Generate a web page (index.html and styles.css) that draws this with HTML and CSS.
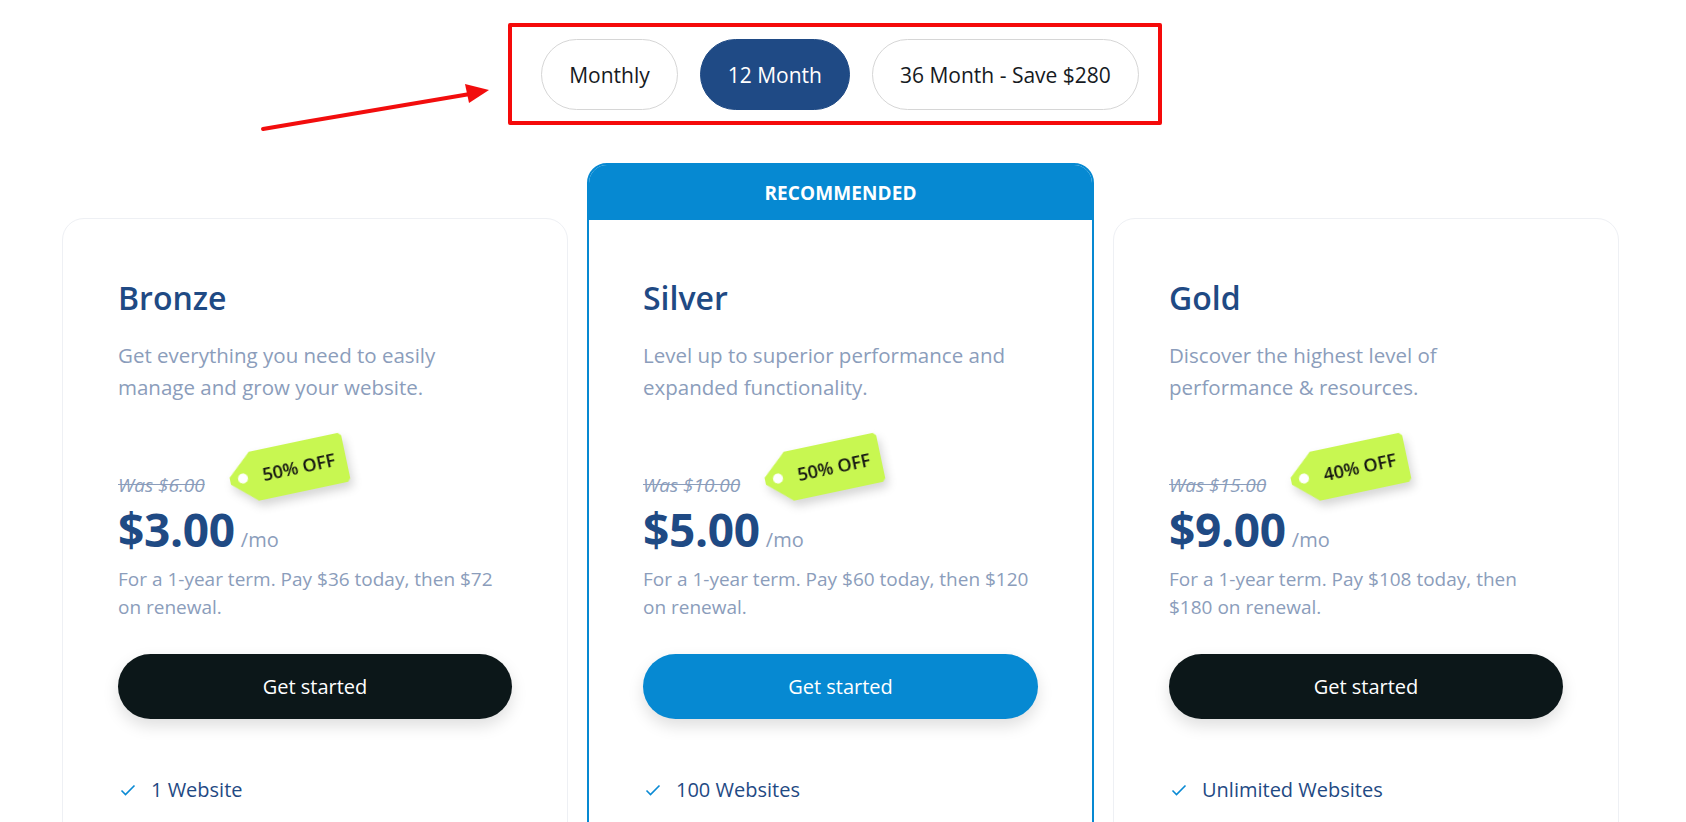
FILE: index.html
```html
<!DOCTYPE html>
<html lang="en">
<head>
<meta charset="utf-8">
<title>Pricing</title>
<link rel="stylesheet" href="styles.css">
</head>
<body>
<svg class="arrow" width="520" height="140" viewBox="0 0 520 140" aria-hidden="true">
  <line x1="263" y1="129" x2="470" y2="94" stroke="#f20d0d" stroke-width="4" stroke-linecap="round"/>
  <polygon points="489,90 469,103 465,84" fill="#f20d0d"/>
</svg>
<main class="page">
  <div class="annot-box"></div>
  <nav class="toggle">
    <button class="pill">Monthly</button>
    <button class="pill pill-active">12 Month</button>
    <button class="pill">36 Month - Save $280</button>
  </nav>

  <section class="plans">
    <article class="card">
      <div class="card-body">
        <h2 class="plan-name">Bronze</h2>
        <p class="plan-desc">Get everything you need to easily<br>manage and grow your website.</p>
        <div class="was-row">
          <span class="was">Was $6.00</span>
          <span class="tag-wrap"><span class="tag">50% OFF</span></span>
        </div>
        <div class="price-row"><span class="price">$3.00</span><span class="per">/mo</span></div>
        <p class="term">For a 1-year term. Pay $36 today, then $72<br>on renewal.</p>
        <button class="cta">Get started</button>
        <ul class="features">
          <li><svg class="check" width="16" height="12" viewBox="0 0 16 12"><polyline points="1.5,6.5 5.5,10.5 14.5,1.5" fill="none" stroke="#0a8ad4" stroke-width="1.6"/></svg>1 Website</li>
        </ul>
      </div>
    </article>

    <article class="card card-featured">
      <div class="card-head">RECOMMENDED</div>
      <div class="card-body">
        <h2 class="plan-name">Silver</h2>
        <p class="plan-desc">Level up to superior performance and<br>expanded functionality.</p>
        <div class="was-row">
          <span class="was">Was $10.00</span>
          <span class="tag-wrap"><span class="tag">50% OFF</span></span>
        </div>
        <div class="price-row"><span class="price">$5.00</span><span class="per">/mo</span></div>
        <p class="term">For a 1-year term. Pay $60 today, then $120<br>on renewal.</p>
        <button class="cta cta-blue">Get started</button>
        <ul class="features">
          <li><svg class="check" width="16" height="12" viewBox="0 0 16 12"><polyline points="1.5,6.5 5.5,10.5 14.5,1.5" fill="none" stroke="#0a8ad4" stroke-width="1.6"/></svg>100 Websites</li>
        </ul>
      </div>
    </article>

    <article class="card">
      <div class="card-body">
        <h2 class="plan-name">Gold</h2>
        <p class="plan-desc">Discover the highest level of<br>performance &amp; resources.</p>
        <div class="was-row">
          <span class="was">Was $15.00</span>
          <span class="tag-wrap"><span class="tag">40% OFF</span></span>
        </div>
        <div class="price-row"><span class="price">$9.00</span><span class="per">/mo</span></div>
        <p class="term">For a 1-year term. Pay $108 today, then<br>$180 on renewal.</p>
        <button class="cta">Get started</button>
        <ul class="features">
          <li><svg class="check" width="16" height="12" viewBox="0 0 16 12"><polyline points="1.5,6.5 5.5,10.5 14.5,1.5" fill="none" stroke="#0a8ad4" stroke-width="1.6"/></svg>Unlimited Websites</li>
        </ul>
      </div>
    </article>
  </section>
</main>
</body>
</html>
```

FILE: styles.css
```css
* { box-sizing: border-box; }

html, body {
  margin: 0;
  padding: 0;
  height: 822px;
  overflow: hidden;
  background: #ffffff;
}

body {
  font-family: "Open Sans", "Noto Sans", Arial, sans-serif;
  color: #1f4a84;
  position: relative;
}

.arrow {
  position: absolute;
  left: 0;
  top: 0;
  pointer-events: none;
  z-index: 3;
}

.page {
  position: relative;
  width: 1556px;
  margin-left: 62px;
}

.annot-box {
  position: absolute;
  left: 446px;
  top: 23px;
  width: 654px;
  height: 102px;
  border: 4px solid #f50a0a;
  border-radius: 2px;
  pointer-events: none;
  z-index: 3;
}

.toggle {
  display: flex;
  justify-content: center;
  gap: 22px;
  padding-top: 39px;
}

.pill {
  height: 71px;
  padding: 0 27px;
  border: 1px solid #d6d6d6;
  border-radius: 36px;
  background: #ffffff;
  font-family: "Open Sans", "Noto Sans", Arial, sans-serif;
  font-size: 21px;
  color: #161a22;
  cursor: pointer;
}

.pill-active {
  background: #1f4a85;
  border-color: #1f4a85;
  color: #ffffff;
}

.plans {
  display: grid;
  grid-template-columns: 506px 507px 506px;
  column-gap: 19px;
  align-items: start;
  margin-top: 53px;
}

.card {
  margin-top: 55px;
  height: 700px;
  border: 1px solid #eef0f4;
  border-radius: 22px;
  background: #ffffff;
}

.card-featured {
  margin-top: 0;
  height: 760px;
  border: 2px solid #0689d2;
  border-radius: 20px;
  overflow: hidden;
}

.card-head {
  height: 55px;
  background: #0689d2;
  color: #ffffff;
  font-weight: 700;
  font-size: 19px;
  display: flex;
  align-items: center;
  justify-content: center;
  letter-spacing: 0.1px;
}

.card-body {
  padding: 60px 55px 0;
}

.card-featured .card-body {
  padding: 59px 54px 0;
}

.plan-name {
  margin: 0;
  font-size: 32px;
  line-height: 38px;
  font-weight: 600;
  color: #1f4a84;
}

.plan-desc {
  margin: 22px 0 0;
  font-size: 20.5px;
  line-height: 32px;
  color: #8b9dbb;
}

.was-row {
  display: flex;
  align-items: center;
  height: 24px;
  margin-top: 70px;
}

.was {
  font-size: 19px;
  line-height: 24px;
  font-style: italic;
  text-decoration: line-through;
  color: #8b9dbb;
}

.tag-wrap {
  position: relative;
  margin-left: 24px;
  filter: drop-shadow(2px 6px 5px rgba(0, 0, 0, 0.16));
  transform: translateY(-16px) rotate(-12deg);
}

.tag {
  display: flex;
  align-items: center;
  justify-content: center;
  width: 118px;
  height: 50px;
  padding-left: 22px;
  background: #c8f751;
  clip-path: polygon(0 43%, 22px 2px, 24px 0, 115px 0, 118px 3px, 118px 47px, 115px 50px, 24px 50px, 22px 48px, 0 57%);
  color: #111111;
  font-size: 18px;
  font-weight: 600;
  white-space: nowrap;
}

.tag::after {
  content: "";
  position: absolute;
  left: 8px;
  top: 20px;
  width: 10px;
  height: 10px;
  border-radius: 50%;
  background: #ffffff;
}

.price-row {
  display: flex;
  align-items: baseline;
  margin-top: 9px;
}

.price {
  font-size: 46px;
  line-height: 46px;
  font-weight: 700;
  color: #1f4a84;
  letter-spacing: -0.3px;
}

.per {
  margin-left: 6px;
  font-size: 20px;
  color: #8b9dbb;
}

.term {
  margin: 12px 0 0;
  font-size: 19px;
  line-height: 28px;
  color: #8b9dbb;
}

.cta {
  display: block;
  width: 100%;
  height: 65px;
  margin-top: 33px;
  border: none;
  border-radius: 33px;
  background: #0c1719;
  color: #ffffff;
  font-family: "Open Sans", "Noto Sans", Arial, sans-serif;
  font-size: 20px;
  font-weight: 500;
  box-shadow: 0 7px 16px rgba(0, 0, 0, 0.13);
  cursor: pointer;
}

.cta-blue {
  background: #0689d2;
}

.features {
  list-style: none;
  margin: 56px 0 0;
  padding: 0;
}

.features li {
  display: flex;
  align-items: center;
  font-size: 20px;
  line-height: 30px;
  color: #1f4a84;
}

.check {
  margin-left: 2px;
  margin-right: 15px;
  flex: none;
}
```
